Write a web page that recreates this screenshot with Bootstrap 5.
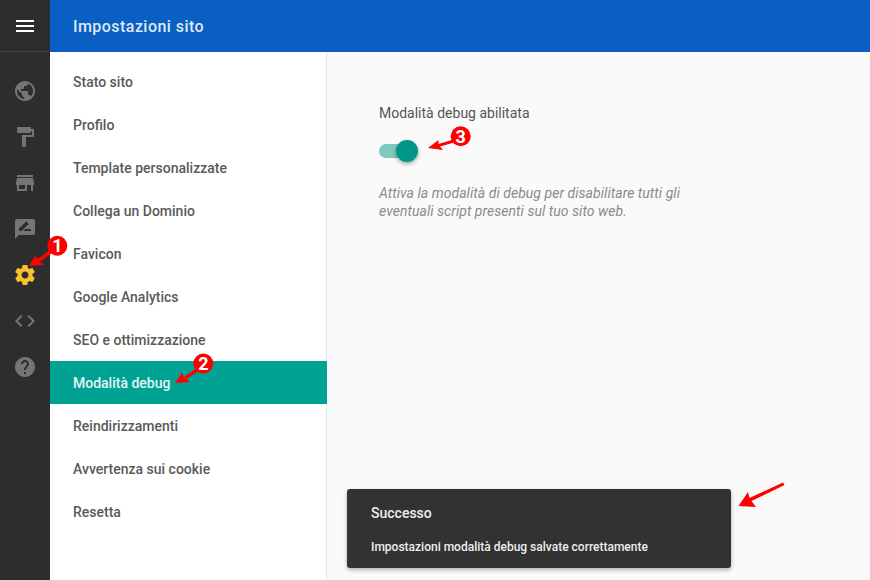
<!DOCTYPE html>
<html lang="it">
<head>
<meta charset="utf-8">
<title>Impostazioni sito</title>
<link rel="stylesheet" href="https://cdn.jsdelivr.net/npm/bootstrap@5.3.0/dist/css/bootstrap.min.css">
<style>
html,body{height:100%;overflow:hidden}
body{font-family:Roboto,"Liberation Sans",sans-serif;background:#fafafa;color:#555}
.app-shell{width:870px;height:580px;position:relative}
.rail{width:50px;background:#2d2d2d}
.rail-top{height:52px;border-bottom:1px solid #424242}
.rail-nav{padding-top:27px;gap:22px}
.rail-nav svg{width:24px;height:24px;fill:#757575;display:block}
.rail-nav svg.on{fill:#fbc02d}
.burger{width:18px;height:2px;background:#fff;box-shadow:0 -5px 0 #fff,0 5px 0 #fff;display:block}
.topbar{height:52px;background:#0a5fc4;color:#dfe9f6;font-size:16px;font-weight:500;letter-spacing:.45px;padding:2px 0 0 23px}
.side-menu{width:277px;background:#fff;border-right:1px solid #e6e6e6;padding-top:8px}
.side-menu a{height:43px;padding:2px 0 0 23px;color:#5a5a5a;font-size:14px;font-weight:500;text-decoration:none}
.side-menu a.on{background:#00a293;color:#e2f5f3;margin-right:-1px}
.pane{background:#fafafa;padding:51px 0 0 52px}
.pane-label{font-size:14px;line-height:20px;color:#555}
.switch-track{width:30px;height:14px;border-radius:7px;background:#7fcabf;position:relative;margin:21px 0 0;display:block}
.switch-knob{width:22px;height:22px;border-radius:50%;background:#009688;position:absolute;right:-9px;top:-4px;box-shadow:0 2px 4px rgba(0,0,0,.35)}
.pane-hint{font-size:14px;font-style:italic;letter-spacing:.04px;line-height:18px;color:#8a8a8a;margin:26px 0 0;width:350px}
.snack{position:absolute;left:347px;top:489px;width:384px;height:79px;background:#323232;border-radius:3px;color:#eee;box-shadow:0 2px 4px rgba(0,0,0,.3);padding:15px 24px 0}
.snack-title{font-size:14px;line-height:18px;font-weight:500}
.snack-text{font-size:12px;line-height:16px;font-weight:500;margin-top:17px}
.marks{position:absolute;left:0;top:0;width:870px;height:580px;pointer-events:none}
.marks text{font-family:Roboto,"Liberation Sans",sans-serif;font-size:18px;font-weight:700;fill:#fff;text-anchor:middle}
</style>
</head>
<body>
<div class="app-shell d-flex">
  <div class="rail d-flex flex-column flex-shrink-0">
    <div class="rail-top d-flex align-items-center justify-content-center"><span class="burger"></span></div>
    <div class="rail-nav d-flex flex-column align-items-center">
      <svg viewBox="0 0 24 24"><path d="M12 2C6.48 2 2 6.48 2 12s4.48 10 10 10 10-4.48 10-10S17.52 2 12 2zm-1 17.93c-3.95-.49-7-3.85-7-7.93 0-.62.08-1.21.21-1.79L9 15v1c0 1.1.9 2 2 2v1.93zm6.9-2.54c-.26-.81-1-1.39-1.9-1.39h-1v-3c0-.55-.45-1-1-1H8v-2h2c.55 0 1-.45 1-1V7h2c1.1 0 2-.9 2-2v-.41c2.93 1.19 5 4.06 5 7.41 0 2.08-.8 3.97-2.1 5.39z"/></svg>
      <svg viewBox="0 0 24 24"><path d="M18 4V3c0-.55-.45-1-1-1H5c-.55 0-1 .45-1 1v4c0 .55.45 1 1 1h12c.55 0 1-.45 1-1V6h1v4H9v11c0 .55.45 1 1 1h2c.55 0 1-.45 1-1v-9h8V4h-3z"/></svg>
      <svg viewBox="0 0 24 24"><path d="M20 4H4v2h16V4zm1 10v-2l-1-5H4l-1 5v2h1v6h10v-6h4v6h2v-6h1zm-9 4H6v-4h6v4z"/></svg>
      <svg viewBox="0 0 24 24"><path d="M20 2H4c-1.1 0-1.99.9-1.99 2L2 22l4-4h14c1.1 0 2-.9 2-2V4c0-1.1-.9-2-2-2zM6 14v-2.47l6.88-6.88c.2-.2.51-.2.71 0l1.77 1.77c.2.2.2.51 0 .71L8.47 14H6zm12 0h-7.500l2-2H18v2z"/></svg>
      <svg class="on" viewBox="0 0 24 24"><path d="M19.43 12.98c.04-.32.07-.64.07-.98s-.03-.66-.07-.98l2.11-1.65c.19-.15.24-.42.12-.64l-2-3.46c-.12-.22-.39-.3-.61-.22l-2.49 1c-.52-.4-1.08-.73-1.69-.98l-.38-2.65C14.46 2.18 14.25 2 14 2h-4c-.25 0-.46.18-.49.42l-.38 2.65c-.61.25-1.17.59-1.69.98l-2.49-1c-.23-.09-.49 0-.61.22l-2 3.46c-.13.22-.07.49.12.64l2.11 1.65c-.04.32-.07.65-.07.98s.03.66.07.98l-2.11 1.65c-.19.15-.24.42-.12.64l2 3.46c.12.22.39.3.61.22l2.49-1c.52.4 1.08.73 1.69.98l.38 2.65c.03.24.24.42.49.42h4c.25 0 .46-.18.49-.42l.38-2.65c.61-.25 1.17-.59 1.69-.98l2.49 1c.23.09.49 0 .61-.22l2-3.46c.12-.22.07-.49-.12-.64l-2.11-1.65zM12 15.5c-1.93 0-3.5-1.57-3.5-3.5s1.57-3.5 3.5-3.5 3.5 1.57 3.5 3.5-1.57 3.5-3.5 3.5z"/></svg>
      <svg viewBox="0 0 24 24"><path d="M9.4 16.6L4.8 12l4.6-4.6L8 6l-6 6 6 6 1.4-1.4zm5.2 0l4.6-4.6-4.6-4.6L16 6l6 6-6 6-1.4-1.4z"/></svg>
      <svg viewBox="0 0 24 24"><path d="M12 2C6.48 2 2 6.48 2 12s4.48 10 10 10 10-4.48 10-10S17.52 2 12 2zm1 17h-2v-2h2v2zm2.07-7.75l-.9.92C13.45 12.9 13 13.5 13 15h-2v-.5c0-1.1.45-2.1 1.17-2.83l1.24-1.26c.37-.36.59-.86.59-1.41 0-1.1-.9-2-2-2s-2 .9-2 2H8c0-2.21 1.79-4 4-4s4 1.79 4 4c0 .88-.36 1.68-.93 2.25z"/></svg>
    </div>
  </div>
  <div class="d-flex flex-column flex-grow-1">
    <div class="topbar d-flex align-items-center flex-shrink-0">Impostazioni sito</div>
    <div class="d-flex flex-grow-1">
      <nav class="side-menu d-flex flex-column flex-shrink-0">
        <a class="d-flex align-items-center" href="#">Stato sito</a>
        <a class="d-flex align-items-center" href="#">Profilo</a>
        <a class="d-flex align-items-center" href="#">Template personalizzate</a>
        <a class="d-flex align-items-center" href="#">Collega un Dominio</a>
        <a class="d-flex align-items-center" href="#">Favicon</a>
        <a class="d-flex align-items-center" href="#">Google Analytics</a>
        <a class="d-flex align-items-center" href="#">SEO e ottimizzazione</a>
        <a class="d-flex align-items-center on" href="#">Modalità debug</a>
        <a class="d-flex align-items-center" href="#">Reindirizzamenti</a>
        <a class="d-flex align-items-center" href="#">Avvertenza sui cookie</a>
        <a class="d-flex align-items-center" href="#">Resetta</a>
      </nav>
      <main class="pane flex-grow-1">
        <div class="pane-label">Modalità debug abilitata</div>
        <span class="switch-track"><span class="switch-knob"></span></span>
        <p class="pane-hint">Attiva la modalità di debug per disabilitare tutti gli eventuali script presenti sul tuo sito web.</p>
      </main>
    </div>
  </div>
  <div class="snack">
    <div class="snack-title">Successo</div>
    <div class="snack-text">Impostazioni modalità debug salvate correttamente</div>
  </div>
  <svg class="marks" viewBox="0 0 870 580">
    <g fill="#f00" stroke="none">
      <path d="M29 266L35.500 255L37.500 259L50 250L52 253L40 262L44 265Z"/>
      <path d="M175 383L182 372.500L184 377L197 368L199 371L186.500 379L190 382Z"/>
      <path d="M428 148L438.500 140L438.500 144L455 139L456 142L440 146.500L443 150Z"/>
      <path d="M738.500 506L748 492L749.500 498L783 482.500L784.500 485L751.500 501L756 507Z"/>
      <circle cx="57.300" cy="245.700" r="10"/>
      <circle cx="203.300" cy="363.500" r="10"/>
      <circle cx="460.700" cy="136.300" r="10"/>
    </g>
    <text x="57.300" y="252">1</text>
    <text x="203.300" y="370">2</text>
    <text x="460.700" y="143">3</text>
  </svg>
</div>
<script src="https://cdn.jsdelivr.net/npm/bootstrap@5.3.0/dist/js/bootstrap.bundle.min.js"></script>
</body>
</html>
